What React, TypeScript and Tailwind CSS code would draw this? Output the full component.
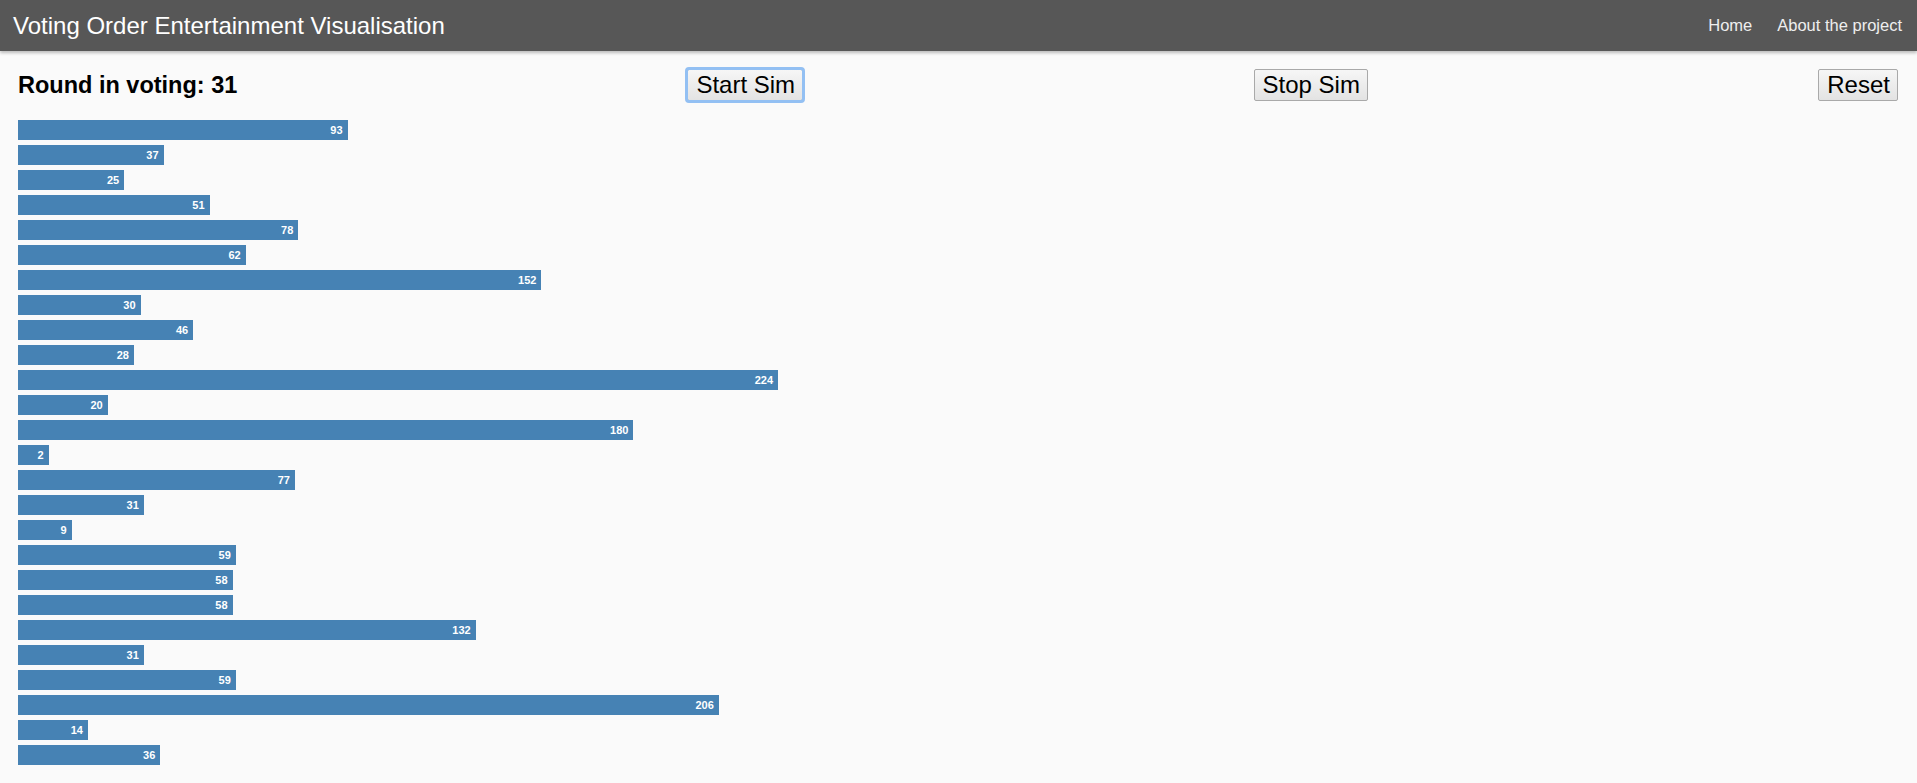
import React from "react";

const votes = [93, 37, 25, 51, 78, 62, 152, 30, 46, 28, 224, 20, 180, 2, 77, 31, 9, 59, 58, 58, 132, 31, 59, 206, 14, 36];

const btn =
  "border border-[#a9a9a9] bg-gradient-to-b from-[#f6f6f6] to-[#e3e3e3] pl-[8px] pr-[7px] h-[32px] text-[24px] leading-none text-black rounded-[2px] whitespace-nowrap";

export default function App() {
  return (
    <div className="min-h-[783px] bg-[#fafafa] font-['Liberation_Sans',Arial,sans-serif]">
      <nav className="flex h-[51px] items-center justify-between bg-[#575757] pl-[13px] pr-[15px] shadow-[0_2px_3px_rgba(0,0,0,0.25)]">
        <span className="text-[24px] font-light text-white">Voting Order Entertainment Visualisation</span>
        <div className="flex gap-[25px] text-[16.5px] text-[#eeeeee]">
          <a>Home</a>
          <a>About the project</a>
        </div>
      </nav>

      <div className="flex items-center justify-between pl-[18px] pr-[19px] pt-[16px]">
        <h2 className="h-[36px] w-[219px] whitespace-nowrap text-[23.5px] font-bold leading-[36px] text-black">
          Round in voting: 31
        </h2>
        <button className={`${btn} outline outline-[3px] outline-[#93c0f3] -outline-offset-1`}>Start Sim</button>
        <button className={btn}>Stop Sim</button>
        <button className={btn}>Reset</button>
      </div>

      <div className="mt-[17px] flex flex-col gap-[5px] pl-[18px]">
        {votes.map((v, i) => (
          <div
            key={i}
            className="flex h-[20px] items-center justify-end bg-[#4682b4] pr-[5px] text-[11px] font-bold text-white"
            style={{ width: v * (736 / 224) + 24 }}
          >
            {v}
          </div>
        ))}
      </div>
    </div>
  );
}
